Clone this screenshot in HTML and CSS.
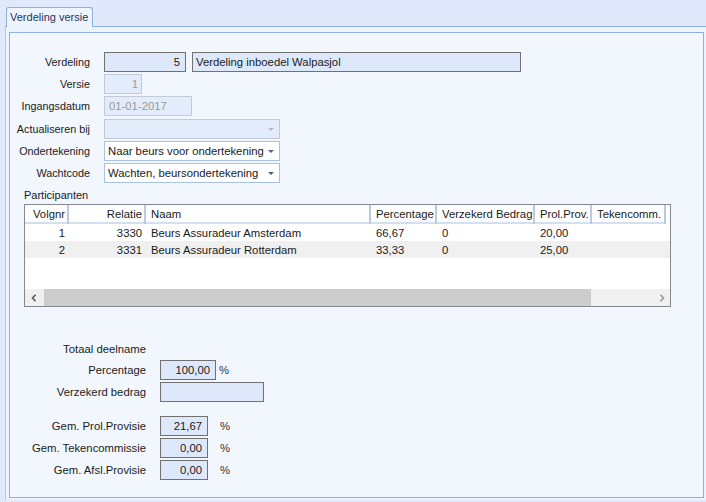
FILE: index.html
```html
<!DOCTYPE html>
<html>
<head>
<meta charset="utf-8">
<link rel="stylesheet" href="styles.css">
</head>
<body>
<div class="window">
  <div class="tabstrip">
    <div class="tab-lead"></div>
    <div class="tab">Verdeling versie</div>
    <div class="tab-fill"></div>
  </div>
  <div class="page">
    <div class="panel">
      <div class="form">
        <div class="row">
          <div class="label">Verdeling</div>
          <div class="fields">
            <div class="box ro num w82">5</div>
            <div class="box ro w329">Verdeling inboedel Walpasjol</div>
          </div>
        </div>
        <div class="row">
          <div class="label">Versie</div>
          <div class="fields"><div class="box dis num w38">1</div></div>
        </div>
        <div class="row">
          <div class="label">Ingangsdatum</div>
          <div class="fields"><div class="box dis w88">01-01-2017</div></div>
        </div>
        <div class="row gap3">
          <div class="label">Actualiseren bij</div>
          <div class="fields">
            <div class="combo dis w176"><span class="ctext"></span><span class="arrow arrow-dis"></span></div>
          </div>
        </div>
        <div class="row">
          <div class="label">Ondertekening</div>
          <div class="fields">
            <div class="combo w176"><span class="ctext">Naar beurs voor ondertekening</span><span class="arrow"></span></div>
          </div>
        </div>
        <div class="row">
          <div class="label">Wachtcode</div>
          <div class="fields">
            <div class="combo w176"><span class="ctext">Wachten, beursondertekening</span><span class="arrow"></span></div>
          </div>
        </div>
      </div>

      <div class="section-title">Participanten</div>
      <div class="grid">
        <div class="grow ghead">
          <div class="gc c1 r">Volgnr</div>
          <div class="gc c2 r">Relatie</div>
          <div class="gc c3">Naam</div>
          <div class="gc c4">Percentage</div>
          <div class="gc c5">Verzekerd Bedrag</div>
          <div class="gc c6">Prol.Prov.</div>
          <div class="gc c7">Tekencomm.</div>
        </div>
        <div class="grow">
          <div class="gc c1 r">1</div>
          <div class="gc c2 r">3330</div>
          <div class="gc c3">Beurs Assuradeur Amsterdam</div>
          <div class="gc c4">66,67</div>
          <div class="gc c5">0</div>
          <div class="gc c6">20,00</div>
          <div class="gc c7"></div>
        </div>
        <div class="grow alt">
          <div class="gc c1 r">2</div>
          <div class="gc c2 r">3331</div>
          <div class="gc c3">Beurs Assuradeur Rotterdam</div>
          <div class="gc c4">33,33</div>
          <div class="gc c5">0</div>
          <div class="gc c6">25,00</div>
          <div class="gc c7"></div>
        </div>
        <div class="gspace"></div>
        <div class="hscroll">
          <div class="sbtn"><svg width="6" height="8" viewBox="0 0 6 8"><path d="M4.5 0.8 L1.5 4 L4.5 7.2" fill="none" stroke="#5a5a5a" stroke-width="1.6"/></svg></div>
          <div class="thumb"></div>
          <div class="strack"></div>
          <div class="sbtn"><svg width="6" height="8" viewBox="0 0 6 8"><path d="M1.5 0.8 L4.5 4 L1.5 7.2" fill="none" stroke="#9a9a9a" stroke-width="1.6"/></svg></div>
        </div>
      </div>

      <div class="totals">
        <div class="trow">
          <div class="tlabel">Totaal deelname</div>
        </div>
        <div class="trow">
          <div class="tlabel">Percentage</div>
          <div class="box ro num w56">100,00</div>
          <span class="pct pct-near">%</span>
        </div>
        <div class="trow">
          <div class="tlabel">Verzekerd bedrag</div>
          <div class="box ro num w104"></div>
        </div>
        <div class="trow mt13">
          <div class="tlabel">Gem. Prol.Provisie</div>
          <div class="box ro num w48">21,67</div>
          <span class="pct pct-far">%</span>
        </div>
        <div class="trow">
          <div class="tlabel">Gem. Tekencommissie</div>
          <div class="box ro num w48">0,00</div>
          <span class="pct pct-far">%</span>
        </div>
        <div class="trow">
          <div class="tlabel">Gem. Afsl.Provisie</div>
          <div class="box ro num w48">0,00</div>
          <span class="pct pct-far">%</span>
        </div>
      </div>
    </div>
  </div>
</div>
</body>
</html>
```

FILE: styles.css
```css
html, body {
  margin: 0;
  padding: 0;
}
body {
  width: 706px;
  height: 502px;
  overflow: hidden;
  background: #dfe9fb;
  font-family: "Liberation Sans", Arial, sans-serif;
  font-size: 11.3px;
  color: #1a1a1a;
}
.window {
  margin-left: 5px;
  width: 701px;
}
.tabstrip {
  display: flex;
  height: 27px;
  align-items: flex-end;
}
.tab-lead {
  width: 1px;
  height: 0;
  border-bottom: 1px solid #8db1e1;
}
.tab-fill {
  flex: 1;
  height: 0;
  border-bottom: 1px solid #8db1e1;
}
.tab {
  box-sizing: border-box;
  width: 87px;
  height: 20px;
  border: 1px solid #8db1e1;
  border-bottom: none;
  border-radius: 3px 3px 0 0;
  background: #eef4fd;
  color: #1b3461;
  padding-left: 3px;
  line-height: 18px;
  font-size: 11px;
  white-space: nowrap;
}
.page {
  box-sizing: border-box;
  height: 473px;
  background: #eef4fd;
  border-left: 1px solid #b4caea;
  padding: 5px 2px 2px 3px;
}
.panel {
  box-sizing: border-box;
  height: 466px;
  border: 1px solid #8db1e1;
  background: #f2f7fe;
  padding-top: 19px;
}
.form {
  display: flex;
  flex-direction: column;
  gap: 2px;
}
.row {
  display: flex;
  align-items: center;
  height: 20px;
}
.row.gap3 {
  margin-top: 1px;
}
.label {
  width: 80px;
  text-align: right;
  margin-right: 14px;
  white-space: nowrap;
  font-size: 10.8px;
}
.fields {
  display: flex;
  gap: 6px;
}
.box {
  box-sizing: border-box;
  height: 20px;
  line-height: 18px;
  border: 1px solid #707070;
  background: #dde9fb;
  padding: 0 3px;
  white-space: nowrap;
  overflow: hidden;
}
.box.num {
  text-align: right;
  padding-right: 5px;
}
.box.dis {
  border-color: #c3cbd7;
  background: #e2ecfb;
  color: #9a9a9a;
}
.box.dis.num {
  padding-right: 3px;
}
.w82 { width: 82px; }
.w329 { width: 329px; }
.w38 { width: 38px; }
.w88 { width: 88px; padding-left: 4px; }
.w176 { width: 176px; }
.w56 { width: 56px; }
.w104 { width: 104px; }
.w48 { width: 48px; }

.combo {
  box-sizing: border-box;
  height: 20px;
  display: flex;
  align-items: center;
  border: 1px solid #a9c2e4;
  background: #ffffff;
  padding: 0 5px 0 3px;
}
.combo.dis {
  border-color: #c3cbd7;
  background: #e2ecfb;
}
.ctext {
  flex: 1;
  white-space: nowrap;
  overflow: hidden;
}
.arrow {
  width: 0;
  height: 0;
  border-left: 3px solid transparent;
  border-right: 3px solid transparent;
  border-top: 3px solid #4e6287;
}
.arrow-dis {
  border-top-color: #c5b3c7;
}

.section-title {
  height: 21px;
  line-height: 25px;
  padding-left: 14px;
  font-size: 11px;
}
.grid {
  box-sizing: border-box;
  margin-left: 14px;
  width: 647px;
  height: 103px;
  border: 1px solid #828790;
  background: #ffffff;
  display: flex;
  flex-direction: column;
}
.grow {
  display: flex;
  height: 17px;
  line-height: 18px;
}
.grow.alt {
  background: #f0f0f0;
}
.ghead {
  height: 19px;
  line-height: 18px;
}
.gc {
  box-sizing: border-box;
  padding-left: 5px;
  white-space: nowrap;
  overflow: hidden;
}
.gc.r {
  text-align: right;
  padding-left: 0;
  padding-right: 4px;
}
.ghead .gc {
  border-right: 2px solid #b9cae2;
  box-shadow: inset 0 -2px 0 #d3e0f2;
}
.ghead .gc.r {
  padding-right: 2px;
}
.c1 { width: 44px; }
.c2 { width: 77px; }
.c3 { width: 225px; }
.c4 { width: 66px; }
.c5 { width: 98px; }
.c6 { width: 57px; }
.c7 { width: 74px; }
.gspace {
  flex: 1;
}
.hscroll {
  height: 17px;
  display: flex;
  background: #f0f0f0;
}
.sbtn {
  width: 17px;
  display: flex;
  align-items: center;
  justify-content: center;
}
.thumb {
  width: 547px;
  margin-left: 2px;
  background: #cdcdcd;
}
.strack {
  flex: 1;
}

.totals {
  margin-top: 32px;
  display: flex;
  flex-direction: column;
  gap: 2px;
}
.trow {
  display: flex;
  align-items: center;
  height: 20px;
}
.trow:first-child {
  margin-bottom: -1px;
}
.trow.mt13 {
  margin-top: 12px;
}
.tlabel {
  width: 136px;
  text-align: right;
  margin-right: 14px;
  white-space: nowrap;
}
.pct {
  color: #333;
}
.pct-near { margin-left: 3px; }
.pct-far { margin-left: 12px; }
```
